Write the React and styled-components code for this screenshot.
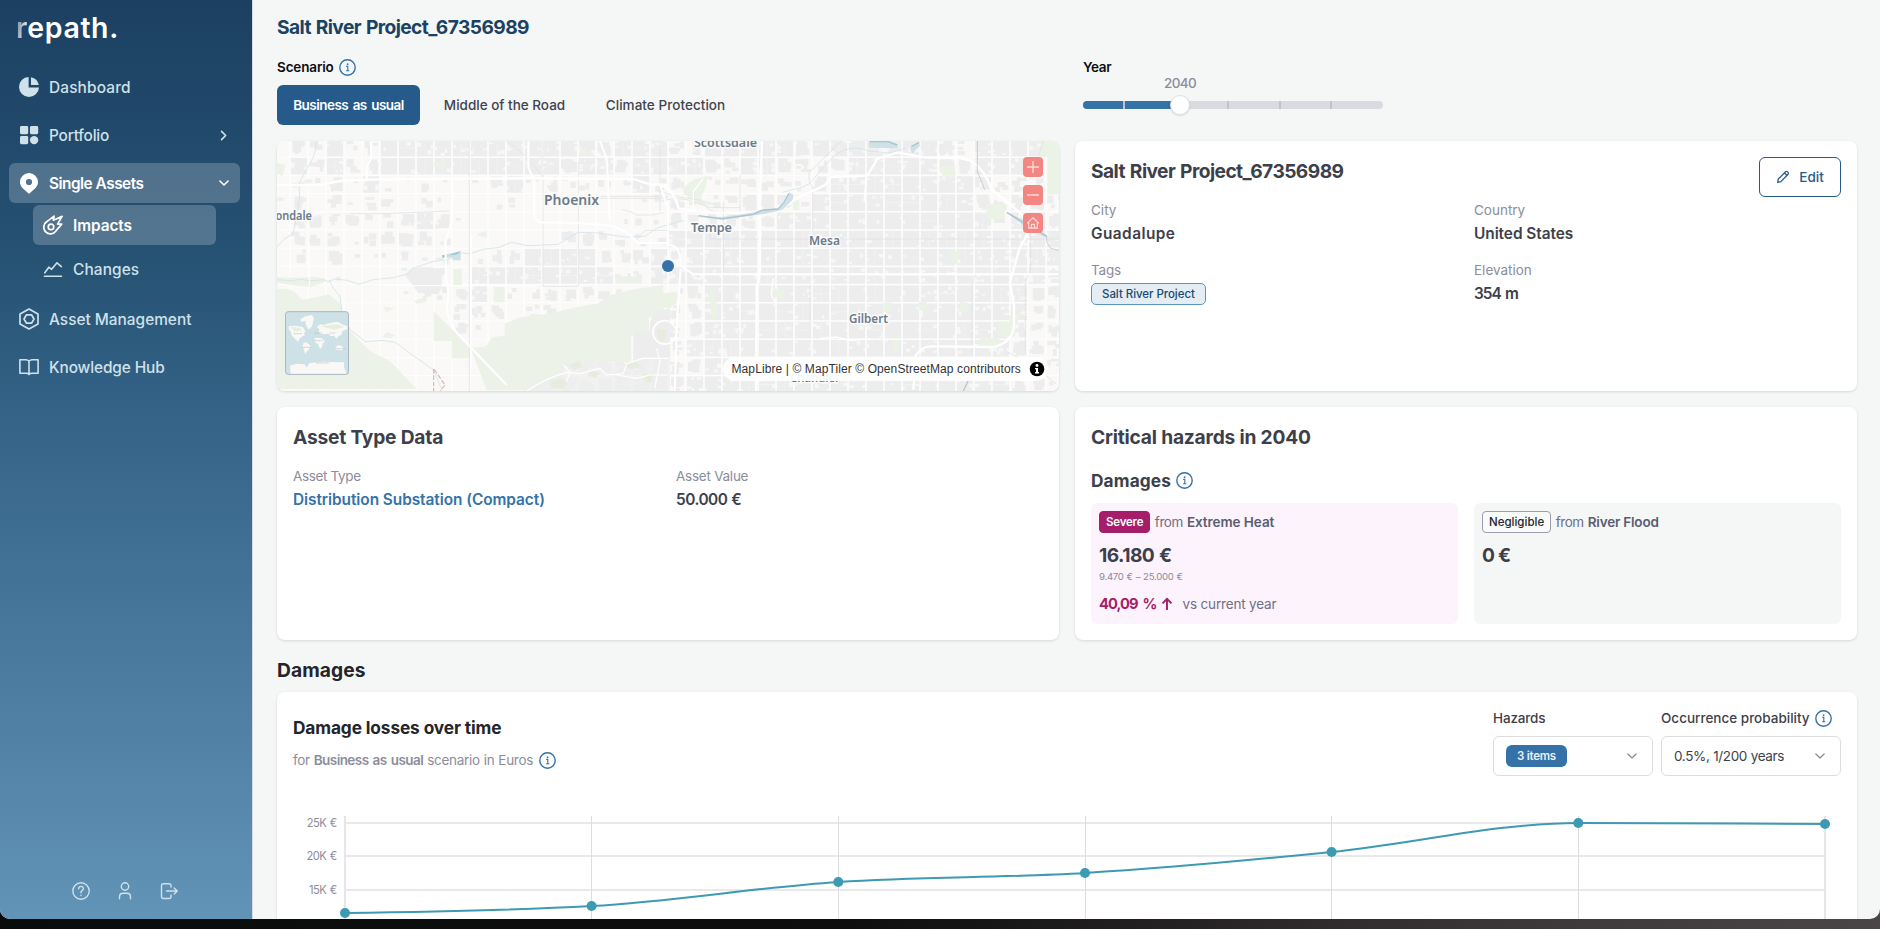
import React from 'react';
import styled, { createGlobalStyle, css } from 'styled-components';

const GlobalStyle = createGlobalStyle`
  * { box-sizing: border-box; }
  html, body { margin: 0; padding: 0; }
  body {
    background: linear-gradient(90deg, #0a0c0c 0%, #0d0e0d 45%, #242122 62%, #3d393b 82%, #4a4648 100%);
    font-family: Inter, "Liberation Sans", sans-serif;
    overflow: hidden;
  }
`;

/* ---------- shell ---------- */
const Backdrop = styled.div`
  height: 929px;
`;
const Shell = styled.div`
  display: flex;
  width: 1880px;
  height: 919px;
  overflow: hidden;
  border-radius: 0 0 10px 10px;
  background: #f5f7f7;
`;
const Sidebar = styled.aside`
  display: flex;
  flex-direction: column;
  flex: none;
  width: 253px;
  padding: 13px 12px 18px 9px;
  border-right: 1px solid #d9dbe0;
  background: linear-gradient(180deg, #1c4062 0%, #265273 28%, #316084 42%, #6294b7 100%);
`;
const Logo = styled.div`
  height: 32px;
  padding-left: 7px;
  margin-bottom: 22px;
  font-size: 28.5px;
  font-weight: 600;
  line-height: 30px;
  letter-spacing: 0.6px;
  color: #fff;
`;
const LogoFade = styled.span`
  background: linear-gradient(100deg, #8fa2b4 35%, #fff 85%);
  background-clip: text;
  color: transparent;
`;
const Nav = styled.nav`
  display: flex;
  flex-direction: column;
`;
const NavItem = styled.a`
  display: flex;
  align-items: center;
  height: 40px;
  width: ${(p) => (p.$sub ? '183px' : '231px')};
  margin: ${(p) => p.$margin || '0 0 8px'};
  padding: 0 10px;
  border-radius: 6px;
  gap: 10px;
  font-size: 15.4px;
  font-weight: ${(p) => (p.$active ? 600 : 500)};
  letter-spacing: ${(p) => p.$ls || 0}px;
  color: ${(p) => (p.$active ? '#fff' : '#cfe1ea')};
  background: ${(p) => (p.$active ? 'rgba(255,255,255,0.21)' : 'transparent')};
  svg { flex: none; }
`;
const NavLabel = styled.span`
  flex: 1;
  white-space: nowrap;
`;
const SidebarFooter = styled.div`
  display: flex;
  justify-content: center;
  gap: 24px;
  margin-top: auto;
  padding-left: 1px;
  color: #cfe1ea;
`;

/* ---------- content ---------- */
const Main = styled.main`
  display: flex;
  flex-direction: column;
  flex: 1;
  padding: 15px 23px 0 24px;
`;
const textBase = css`
  margin: 0;
  white-space: nowrap;
  letter-spacing: ${(p) => p.$ls || 0}px;
  word-spacing: ${(p) => p.$ws || 0}px;
`;
const PageTitle = styled.h1`
  ${textBase}
  font-size: 19.2px;
  line-height: 24px;
  font-weight: 700;
  color: #1b4263;
`;
const Controls = styled.div`
  display: flex;
  height: 68px;
  margin: 18px 0 16px;
`;
const ScenarioBlock = styled.div`
  width: 806px;
`;
const ControlLabel = styled.div`
  ${textBase}
  display: flex;
  align-items: center;
  gap: 5.5px;
  height: 20px;
  font-size: 13.5px;
  font-weight: 600;
  color: #0c0d10;
`;
const Segments = styled.div`
  display: flex;
  gap: 8px;
  margin-top: 8px;
`;
const Segment = styled.button`
  height: 40px;
  width: ${(p) => p.$w}px;
  padding: 0;
  border: 0;
  border-radius: 6px;
  font: ${(p) => (p.$on ? 600 : 500)} 13.5px Inter, sans-serif;
  letter-spacing: ${(p) => p.$ls || 0}px;
  word-spacing: ${(p) => p.$ws || 0}px;
  white-space: nowrap;
  color: ${(p) => (p.$on ? '#fff' : '#41434f')};
  background: ${(p) => (p.$on ? '#265a8b' : 'transparent')};
`;
const YearBlock = styled.div`
  width: 300px;
`;
const SliderBox = styled.div`
  position: relative;
  height: 8px;
  margin-top: 24px;
  border-radius: 4px;
  background: #d9dbe0;
`;
const SliderFill = styled.div`
  width: 97px;
  height: 8px;
  border-radius: 4px 0 0 4px;
  background: #3472a8;
`;
const Tick = styled.i`
  position: absolute;
  top: 0;
  left: ${(p) => p.$x}px;
  width: 2px;
  height: 8px;
  background: #c1c3cb;
`;
const Thumb = styled.div`
  position: absolute;
  left: 87px;
  top: -6px;
  width: 20px;
  height: 20px;
  border: 1px solid #dedfe4;
  border-radius: 50%;
  background: #fff;
  box-shadow: 0 1px 2px rgba(0,0,0,0.12);
`;
const ThumbLabel = styled.span`
  position: absolute;
  left: 77px;
  top: -28px;
  width: 40px;
  text-align: center;
  font-size: 13.5px;
  line-height: 20px;
  font-weight: 500;
  letter-spacing: -0.7px;
  color: #8b8d9b;
`;
const CardGrid = styled.div`
  display: grid;
  grid-template-columns: 782px 782px;
  grid-template-rows: 250px 233px;
  gap: 16px;
`;
const Card = styled.section`
  position: relative;
  overflow: ${(p) => (p.$clip ? 'hidden' : 'visible')};
  padding: ${(p) => (p.$clip ? 0 : '16px')};
  border-radius: 8px;
  background: #fff;
  box-shadow: 0 1px 3px rgba(0,0,0,0.12);
`;
const CardHead = styled.div`
  display: flex;
  justify-content: space-between;
  height: 28px;
  margin-bottom: 15px;
`;
const CardTitle = styled.h2`
  ${textBase}
  font-size: 19.2px;
  line-height: 28px;
  font-weight: 700;
  color: #3d3f4b;
`;
const EditButton = styled.button`
  display: flex;
  align-items: center;
  justify-content: center;
  gap: 9px;
  width: 82px;
  height: 40px;
  padding: 0;
  border: 1px solid #265a8b;
  border-radius: 6px;
  background: #fff;
  color: #265a8b;
  font: 500 13.5px Inter, sans-serif;
`;
const Fields = styled.div`
  display: grid;
  grid-template-columns: 1fr 1fr;
  gap: 16px;
`;
const Field = styled.div`
  display: flex;
  flex-direction: column;
  align-items: flex-start;
  gap: 4px;
`;
const FieldLabel = styled.span`
  ${textBase}
  font-size: 13.5px;
  line-height: 20px;
  color: #8b8d9b;
`;
const FieldValue = styled.span`
  ${textBase}
  font-size: 15.4px;
  line-height: 20px;
  font-weight: 600;
  color: ${(p) => (p.$link ? '#3472a8' : '#3d3f4b')};
`;
const Tag = styled.span`
  ${textBase}
  margin-top: -1px;
  padding: 0 10px;
  border: 1px solid #5c97bb;
  border-radius: 5px;
  background: #e3edf3;
  font-size: 11.5px;
  line-height: 20px;
  font-weight: 500;
  color: #1b4a70;
`;
const SubTitle = styled.h3`
  ${textBase}
  display: flex;
  align-items: center;
  gap: 5px;
  margin: 17px 0 11px;
  height: 24px;
  font-size: 17.3px;
  font-weight: 700;
  color: #3d3f4b;
`;
const HazardGrid = styled.div`
  display: grid;
  grid-template-columns: 1fr 1fr;
  gap: 16px;
`;
const HazardBox = styled.div`
  height: 121px;
  padding: 8px;
  border-radius: 6px;
  background: ${(p) => (p.$severe ? '#fdf3fc' : '#f5f7f7')};
`;
const HazardHead = styled.div`
  display: flex;
  align-items: center;
  height: 22px;
`;
const Badge = styled.span`
  ${textBase}
  margin-right: 4.5px;
  padding: 0 6px;
  border: 1px solid ${(p) => (p.$severe ? '#a61e69' : '#9b9dae')};
  border-radius: 4px;
  background: ${(p) => (p.$severe ? '#a61e69' : '#f9fafa')};
  font-size: 11.5px;
  line-height: 20px;
  font-weight: ${(p) => (p.$severe ? 600 : 500)};
  color: ${(p) => (p.$severe ? '#fff' : '#23252b')};
`;
const HazardText = styled.span`
  ${textBase}
  margin-right: ${(p) => p.$gap || 0}px;
  font-size: 13.5px;
  font-weight: ${(p) => (p.$strong ? 600 : 400)};
  color: ${(p) => (p.$strong ? '#5a5d70' : '#6f7184')};
`;
const Amount = styled.div`
  ${textBase}
  margin-top: 10px;
  font-size: 19.2px;
  line-height: 24px;
  font-weight: 700;
  color: #3d3f4b;
`;
const AmountRange = styled.div`
  ${textBase}
  margin: 3px 0 10px;
  font-size: 9.6px;
  line-height: 14px;
  color: #8b8d9b;
`;
const Change = styled.div`
  display: flex;
  align-items: center;
  height: 20px;
  color: #a61e69;
  svg { margin: 0 10px 0 4px; }
`;
const ChangeValue = styled.span`
  ${textBase}
  font-size: 14.7px;
  font-weight: 700;
`;
const SectionTitle = styled.h2`
  ${textBase}
  margin: 18px 0 10px;
  font-size: 19.2px;
  line-height: 24px;
  font-weight: 700;
  color: #23252b;
`;
const ChartHead = styled.div`
  display: flex;
  justify-content: space-between;
  height: 92px;
`;
const ChartTitle = styled.h3`
  ${textBase}
  margin: 8px 0 10px;
  font-size: 17.3px;
  line-height: 24px;
  font-weight: 700;
  color: #23252b;
`;
const ChartSub = styled.div`
  display: flex;
  align-items: center;
  height: 20px;
  font-size: 13.5px;
  color: #8b8d9b;
`;
const SubPart = styled.span`
  ${textBase}
  margin-right: ${(p) => p.$gap}px;
  font-weight: ${(p) => (p.$strong ? 600 : 400)};
`;
const Filters = styled.div`
  display: flex;
  gap: 8px;
`;
const FilterLabel = styled.div`
  ${textBase}
  display: flex;
  align-items: center;
  gap: 5px;
  height: 20px;
  margin-bottom: 8px;
  font-size: 13.5px;
  font-weight: 500;
  color: #3d3f4b;
`;
const SelectBox = styled.div`
  ${textBase}
  display: flex;
  align-items: center;
  justify-content: space-between;
  width: ${(p) => p.$w}px;
  height: 40px;
  padding: 0 14px 0 12px;
  border: 1px solid #dcdde0;
  border-radius: 6px;
  font-size: 13.5px;
  color: #3d3f4b;
  svg { color: #8b8d9b; }
`;
const CountBadge = styled.span`
  width: 61px;
  height: 22px;
  border-radius: 6px;
  background: #3472a8;
  text-align: center;
  font-size: 11.5px;
  line-height: 22px;
  font-weight: 600;
  letter-spacing: -0.27px;
  color: #e8f1f7;
`;
const ChartSvg = styled.svg`
  display: block;
  width: 1548px;
  height: 129px;
  text { font-size: 11.2px; letter-spacing: -0.6px; word-spacing: 1px; fill: #8b8d9b; }
`;

/* ---------- map overlays ---------- */
const MapSvg = styled.svg`
  display: block;
  width: 782px;
  height: 250px;
`;
const MapButtons = styled.div`
  position: absolute;
  top: 16px;
  right: 16px;
  display: flex;
  flex-direction: column;
  gap: 8px;
`;
const MapButton = styled.button`
  display: flex;
  align-items: center;
  justify-content: center;
  width: 20px;
  height: 20px;
  padding: 0;
  border: 0;
  border-radius: 4px;
  background: #f38682;
  color: #fbdad8;
`;
const Attribution = styled.div`
  position: absolute;
  right: 11px;
  bottom: 10px;
  display: flex;
  align-items: center;
  justify-content: space-between;
  width: 325.5px;
  height: 24px;
  padding: 0 3px 0 9px;
  border-radius: 12px;
  background: rgba(255,255,255,0.93);
  font: 12px "Liberation Sans", Arial, sans-serif;
  letter-spacing: 0.1px;
  white-space: nowrap;
  color: #333;
`;

/* ---------- icons ---------- */
const Stroke = ({ size = 20, box = 24, w = 2, children }) => (
  <svg width={size} height={size} viewBox={`0 0 ${box} ${box}`} fill="none" stroke="currentColor"
    strokeWidth={w} strokeLinecap="round" strokeLinejoin="round">{children}</svg>
);
const InfoIcon = () => (
  <svg width="17" height="17" viewBox="0 0 17 17" fill="none" stroke="#3472a8">
    <circle cx="8.5" cy="8.5" r="7.7" strokeWidth="1.4" />
    <path d="M7.2 7.4h1.6v4.200M7.1 11.700h3.2" strokeWidth="1.100" />
    <circle cx="8.6" cy="5.2" r="0.9" fill="#3472a8" stroke="none" />
  </svg>
);
const PieIcon = () => (
  <svg width="20" height="20" viewBox="0 0 20 20" fill="currentColor">
    <path d="M9.6 0v10.500H20A10 10 0 1 1 9.600 0Z" />
    <path d="M12 .2A9.800 9.800 0 0 1 19.800 8H12.600a.6.6 0 0 1-.6-.6Z" />
  </svg>
);
const TilesIcon = () => (
  <svg width="20" height="20" viewBox="0 0 20 20" fill="currentColor">
    <rect x="1" y="1" width="8.2" height="8.2" rx="1.4" />
    <rect x="11" y="1" width="8.2" height="8.2" rx="1.4" />
    <rect x="1" y="11" width="8.2" height="8.2" rx="1.4" />
    <circle cx="15.1" cy="15.1" r="4.2" />
  </svg>
);
const PinIcon = () => (
  <svg width="20" height="22" viewBox="0 0 20 22" fill="currentColor">
    <path fillRule="evenodd" d="M10 1a9 9 0 0 1 9 9c0 4.400-3.300 6.900-6.400 9.500L10.700 21.300a1 1 0 0 1-1.400 0L7.400 19.500C4.300 16.900 1 14.400 1 10a9 9 0 0 1 9-9Zm0 5.900a3.100 3.100 0 1 0 0 6.200 3.100 3.100 0 0 0 0-6.200Z" />
  </svg>
);
const MeteorIcon = () => (
  <Stroke box={22} w={1.900}>
    <path d="M21 1.500l-5 8.500h4.600l-6.600 7.800a7.300 7.300 0 1 1-10.100-10.300l8.300-6.300-.8 4.500 9.600-4.200Z" />
    <circle cx="8.800" cy="13.100" r="3" />
  </Stroke>
);
const TrendIcon = () => (
  <Stroke box={20} w={1.600}>
    <path d="M1.800 13.800l4-5.600 2.800 2.100 5.400-6.500 4.400 3.800" />
    <path d="M1.500 17.200h17" />
  </Stroke>
);
const HexIcon = () => (
  <svg width="20" height="22" viewBox="0 0 20 22" fill="none" stroke="currentColor" strokeWidth="1.700" strokeLinejoin="round">
    <path d="M10 1l9 5v10l-9 5-9-5V6Z" />
    <path d="M7.500 6.800h5L15 11l-2.500 4.200h-5L5 11Z" />
  </svg>
);
const BookIcon = () => (
  <Stroke box={20} w={1.600}>
    <path d="M10 4.200Q8.700 2.700 7 2.700H.9v13.600h6.300q1.800 0 2.800 1.200 1-1.200 2.800-1.200h6.300V2.700H13q-1.700 0-3 1.500Zm0 0v13" />
  </Stroke>
);
const Chevron = ({ dir, size = 12, w = 1.600 }) => (
  <Stroke size={size} box={12} w={w}>
    <path d={dir === 'right' ? 'M4.200 2.200l3.800 3.800-3.800 3.800' : 'M1.900 4L6 8 10.100 4'} />
  </Stroke>
);
const PencilIcon = () => (
  <Stroke size={14} box={14} w={1.300}>
    <path d="M2.300 9L9.600 1.700q1.100-.8 2.100.2t.4 2.300L4.900 11.600 1.700 12.400Z M8.500 3l2.500 2.500" />
  </Stroke>
);
const HelpIcon = () => (
  <Stroke box={20} w={1.400}>
    <circle cx="10" cy="10" r="8.200" />
    <path d="M7.600 7.700q.2-2.300 2.500-2.300t2.300 2.200q0 1.300-1.300 2-1.100.6-1.100 1.700v.4M10 14.300v.2" />
  </Stroke>
);
const UserIcon = () => (
  <Stroke box={20} w={1.400}>
    <circle cx="10" cy="5.500" r="3.700" />
    <path d="M4.500 17.800v-2q0-3.600 3.700-3.600h3.600q3.700 0 3.700 3.600v2" />
  </Stroke>
);
const LogoutIcon = () => (
  <Stroke box={20} w={1.400}>
    <path d="M12 6V4.600q0-1.900-1.900-1.900H4.400q-1.900 0-1.900 1.900v11q0 1.900 1.900 1.900h5.700q1.900 0 1.900-1.900V14" />
    <path d="M7.500 10h10.800M15.200 7l3.100 3-3.100 3" />
  </Stroke>
);
const ArrowUpIcon = () => (
  <svg width="12" height="14" viewBox="0 0 12 14" fill="none" stroke="currentColor" strokeWidth="1.900">
    <path d="M6 13V2M1.500 6.300L6 1.800l4.500 4.500" />
  </svg>
);

/* ---------- map drawing ---------- */
// Built-up share (0-9) of every square-mile cell, west to east, north to south.
const DENSITY = [
  '06382399888888888768875689987698888886378975',
  '08384399999998876775888755776546888876579861',
  '02151721210168242222835223443268887988864522',
  '14041430210013000000124323665289989998864553',
  '14544224851000000001215445568889899999975775',
  '04341356420000005522238899899998999988988787',
  '04061112120153898954573788999899889998887',
  '00010001721888798872277789999998989978979886',
  '00000001424722254331103588999899999978989764',
  '00000000004540430000223487899899998989888733',
  '00000000005100000000584678899989989999887534',
  '00000000000000000003784788999899899889887654',
  '00000000000000034567875678999998989998998543',
  '00000000000000055667876788989989899899888642',
];
const rng = (seed) => {
  let s = seed;
  return () => {
    s = (s * 1664525 + 1013904223) % 4294967296;
    return s / 4294967296;
  };
};
const buildBlocks = () => {
  const rand = rng(67);
  let built = '';
  let holes = '';
  let lanes = '';
  const rect = (x, y, w, h) => `M${x.toFixed(1)} ${y.toFixed(1)}h${w.toFixed(1)}v${h.toFixed(1)}h${(-w).toFixed(1)}z`;
  DENSITY.forEach((row, r) => {
    row.padEnd(44, '7').split('').forEach((ch, c) => {
      const d = Number(ch);
      const x = -5 + c * 18;
      const y = -2 + r * 18.2;
      if (d >= 7) {
        built += rect(x + 0.8, y + 0.8, 16.4, 16.6);
        const bites = (10 - d) * 2 - 1;
        for (let i = 0; i < bites; i += 1) {
          const edge = rand() < 0.75;
          const w = 1.5 + rand() * 3.2;
          const h = 1.5 + rand() * 2.8;
          const px = edge ? (rand() < 0.5 ? 0.8 : 17.2 - w) : 2 + rand() * 12;
          holes += rect(x + px, y + 1 + rand() * (16 - h), w, h);
        }
        if (rand() < 0.25) lanes += `M${(x + 9).toFixed(1)} ${y.toFixed(1)}v18`;
        if (rand() < 0.25) lanes += `M${x.toFixed(1)} ${(y + 9).toFixed(1)}h18`;
      } else {
        for (let i = 0; i < d; i += 1) {
          const w = 3 + rand() * (2 + d * 1.3);
          const h = 2.5 + rand() * (2 + d * 1.2);
          built += rect(x + 1 + rand() * (16 - w), y + 1 + rand() * (16 - h), w, h);
        }
      }
    });
  });
  return { built, holes, lanes };
};
const BLOCKS = buildBlocks();
const WEST = 'translate(-7 -6) scale(0.33333)';
const EAST = 'translate(383 -6) scale(0.33333)';
const PARKS_WEST = [
  'M20 462h38l20 12 18 20 60-10 20-6 38 30 6 60 50 50 30 30 60 30 80 84H20Z',
  'M20 426l60 2 55-2 30 4-2 12-40 14-40-4-63-8Z',
  'M491 528l50 50 60 62v30h-56v-52h-54Z',
  'M602 640l46-6 18-28 38-4v-36l48-20 88-10 40-10 60-14 42-6 40-26 60-16 98-14v92l-44 6 4 54h-56v80h-132l-70 6-6 50-30 20-40 8h-156Z',
  'M672 456h32v46h-32Z', 'M550 402h26v48h-26Z', 'M1036 424h80v22h-80Z',
  'M930 40h22v18h-22Z', 'M492 82h34v14h-34Z', 'M110 132l20 4-8 10-28-2Z',
  'M338 515l36 4-24 12Z', 'M432 498l24-8 14 12-30 4Z', 'M336 606l14-14 26 8-16 10Z', 'M622 296l28-8v20l-24-6Z',
  'M20 84l26 6-8 34-16-8Z',
];
const PARKS_EAST = [
  'M68 160l32-26 44-12-10 44-16 28 34 6 14 10-50-2-44-30Z',
  'M1142 18h56v160h-36V66h-20Z', 'M0 476l50-6v34l-20 16-30-4Z',
  'M980 206h54v46h-54Z', 'M842 96l44-4v30h-40Z', 'M870 350l30-4-8 42-20-8Z',
  'M1016 560h50v44h-50Z', 'M958 610h60v26h-60Z', 'M146 456l18 20 12 60-22 20-2-50Z',
  'M336 460l40 6-6 24-30-6Z', 'M670 502h24v28h-24Z', 'M776 500h24v24h-24Z', 'M0 590l30 6-24 40-6-4Z',
  'M696 616h22v36h-16Z', 'M900 500l24 4v26l-20-4Z', 'M1048 540h26v30h-26Z', 'M398 200l20-6v30l-18 2Z',
];

const MapDrawing = () => (
  <MapSvg viewBox="0 0 782 250">
    <defs>
      <pattern id="mile" x="-5.500" y="-2.500" width="18" height="18.200" patternUnits="userSpaceOnUse">
        <path d="M0 .5H18M.5 0V18.200" stroke="#fff" strokeWidth="1" opacity="0.850" />
      </pattern>
    </defs>
    <rect width="782" height="250" fill="#faf9f8" />
    <path d={BLOCKS.built} fill="#ededee" />
    <path d={BLOCKS.holes} fill="#f8f7f7" />
    <path d={BLOCKS.lanes} fill="none" stroke="#f5f5f5" strokeWidth="0.600" />
    <rect width="782" height="250" fill="url(#mile)" />
    <g transform={WEST} fill="#edf2e9">
      {PARKS_WEST.map((d) => <path key={d} d={d} />)}
    </g>
    <g transform={EAST} fill="#ebf2e6">
      {PARKS_EAST.map((d) => <path key={d} d={d} />)}
    </g>
    <g transform={WEST} fill="none">
      <g fill="#ededee">
        <path d="M1140 560l18-30 42-10v150h-110v-80h50Z" />
        <path d="M870 690h60v-12h70l40 8h50v-20h110v102H760l40-36 70-4Z" opacity="0.750" />
        <path d="M405 420l20-20h90v58l-10 20-60-4Z" />
      </g>
      <g fill="#e6eddf">
        <path d="M840 740l30-10 20 12-10 20-36-2ZM900 690l26-14 10 20-24 10ZM960 706l30 6-12 18-24-8ZM1060 690l34-14 20 18-30 10ZM1120 716l30 4-6 24-20-6ZM1160 580l28 6-6 34-20-8Z" />
      </g>
      <g stroke="#d3e4e9" strokeWidth="2.600">
        <path d="M139 18q-2 40-18 66t-34 62q6 40-4 80-8 46-14 70-30 14-48 40" />
        <path d="M20 434l50 4 20-6 30 6 40-4 14 6 20-8 38 4 34 12 44-14 60-6 40-10 18-18 60-20 50-8 32-18 30 2 44-14 40-4 40-16 50 10 90-4 60-36 60 2 80 12 60-2 40-26 76-22" />
        <path d="M178 436l12 24 20 24 6 50 24 50 46 36 50-4 40 6 54 40 60 42 26 62" />
      </g>
      <path d="M536 356l36-8v28h-24v-8h-26v-10Z" fill="#cde1e6" />
      <path d="M516 360l16 2 40-14-10 10-34 4-10 8Z" fill="#a3bfcb" />
      <g stroke="#e3e3e5" strokeWidth="2.500">
        <path d="M598 18v750M819 120v334h106V80M816 18v110M711 18l50 40 52 60M990 184h205M990 190h205M60 236h280l200-8M1170 18v210M1195 286h-70l-26 30M1056 224l30 8 14 8h50l30-8" />
      </g>
      <g stroke="#fff" strokeLinejoin="round">
        <path d="M20 150h130l60-12 80-4 180-2 320-2 300 2 50 16 54 2" strokeWidth="7" />
        <path d="M302 18l2 50-14 30v34M546 134l2 50-4 80-18 60 2 100 8 50-6 50q10 50 40 80l140 146" strokeWidth="6" />
        <path d="M775 18v80l18 40v110l14 14 120 2 96 8q50 14 80 52h92M990 18l20 54 4 60 2 60 4 70M603 300v400" strokeWidth="6" />
        <path d="M118 320v136M330 340v112h270l200 2M20 236h40l180-2" strokeWidth="3" />
        <circle cx="1184" cy="592" r="35" strokeWidth="5" />
        <path d="M770 768q60-40 120-56l40 4 60-16 20 20 50-4 10-30 50-16h75M1040 720l60 10 40-10h55M880 690l20 20-10 30M1160 640l10 40-16 80" strokeWidth="3.500" />
      </g>
      <path d="M491 702v66M493 704l32 46-14 18" stroke="#dbb5b5" strokeWidth="3.500" strokeDasharray="14 5" />
    </g>
    <g transform={EAST} fill="none">
      <g stroke="#e0e0e3" strokeWidth="2.300">
        <path d="M544 18l-96 94q-6 24 10 46v145M150 312h1045M150 280v32M190 200v210M240 120v110M450 450v110M952 18v100M1112 300v100l-16 40v220M946 420l-10 30v210M0 170l60 16 60 10 30 30 40 10M0 200q60-20 110 4l40 14h90M1150 18l-14 46M1040 650l80 40 70 58" />
      </g>
      <g stroke="#fff" strokeLinejoin="round">
        <path d="M306 18l-6 180v220l-10 40-2 310" strokeWidth="7" />
        <path d="M0 150q40 10 56 70l90 12 150 6q70-10 110-46l90-42 16-24 110-4 30-50 60-20 84 16h100l38 10q40 26 60 84l96 80 10 60-22 40-28 100 12 70v60q-4 50-60 64l-190-2q-30 0-46 30l-6 100" strokeWidth="7" />
        <path d="M0 150l24 70v110q40 0 36 60l40 28h1095M62 400l-10 140-8 230" strokeWidth="6" />
        <path d="M0 340h22M100 230v-60l30-40M340 430l-6 50 16 30M480 610l50-4 40 10 60-4M620 120l-8 80" strokeWidth="4" />
      </g>
      <g fill="#cde1e6">
        <path d="M115 244l70 2 100-14 18-8 54-4 20-20 10-28 14 8-4 16-30 28-50 12-120 16-82-6Z" />
        <path d="M626 18h60l26 10v12l-84-2ZM750 40l26-20 4 12-24 24Z" />
        <path d="M1040 232l60 28 60 40v8l-70-36Z" />
      </g>
      <g stroke="#a3bfcb" strokeWidth="4">
        <path d="M116 242l70 10 94-14 24-12 50-4 18-20 14-26M630 20h54l28 10M754 34l24-12M1040 232l120 72M910 768l14-30" opacity="0.850" />
        <path d="M952 18v90l22 56M1160 304v16l12 20 24 6" strokeWidth="2.500" opacity="0.700" />
      </g>
      <path d="M448 146l60-68q40-46 92-38l26 8 64 6 50-16M448 146l-20 10-60 16" stroke="#d3e4e9" strokeWidth="2.500" />
    </g>
    <g fill="#6c7a89" stroke="#fafafa" strokeWidth="3" paintOrder="stroke" fontFamily='"Noto Sans", sans-serif' fontWeight="600" fontSize="13">
      <text x="267" y="63.500" fontSize="15" textLength="55" lengthAdjust="spacingAndGlyphs">Phoenix</text>
      <text x="-15" y="78.500" textLength="50" lengthAdjust="spacingAndGlyphs">Avondale</text>
      <text x="417" y="5.500" textLength="63" lengthAdjust="spacingAndGlyphs">Scottsdale</text>
      <text x="414" y="91" textLength="41" lengthAdjust="spacingAndGlyphs">Tempe</text>
      <text x="532" y="104" textLength="31" lengthAdjust="spacingAndGlyphs">Mesa</text>
      <text x="572" y="182" textLength="39" lengthAdjust="spacingAndGlyphs">Gilbert</text>
      <text x="513" y="241" textLength="50" lengthAdjust="spacingAndGlyphs">Chandler</text>
    </g>
    <circle cx="391" cy="125" r="6" fill="#3472a8" />
    <g transform={WEST}>
      <rect x="46.500" y="530" width="189" height="188" rx="8" fill="#cde1e6" stroke="#aab5c6" strokeWidth="3" />
      <g fill="#f9f8f6">
        <path d="M92 552l14-8 20-4 6 10-6 24-10 10-8-14-2-12-14 2Z" />
        <path d="M56 574l20-2 22 4 8 12-4 8 4 4-12 6-6 6-4 8-8-8-10-10-4-12-6-8Z" />
        <path d="M100 624l8-2 14 10-6 12-6 6-4 8-4-12-4-12Z" />
        <path d="M140 576l10-8 12 2 10-4 30-6 14 8 16 6v8l-14 6-4 12-10 4-4 8-8-10-10 2-6-8-14 2-16-4 2-12Z" />
        <path d="M134 608l22 2 8 8-6 8-2 10-6 6-6-14-10-8Z" />
        <path d="M196 636l12-6 12 8-2 8-22-2Z" />
        <path d="M60 692l20-6 24 2 6 10 8-14 44-4 60 2v14l8 20H62Z" />
      </g>
      <path d="M60 576l30 2 6 8-20 4ZM152 574l50-6 20 8-30 8Z" fill="#e6eedd" />
      <g stroke="#a9a2a8" strokeWidth="2.500" strokeDasharray="3 1.500" opacity="0.700">
        <path d="M72 596h24M134 594h22M134 617h24M98 637h24M180 594h16M194 641h32M140 684h38" />
      </g>
    </g>
  </MapSvg>
);

/* ---------- chart drawing ---------- */
const POINTS = [[345, 913], [591.6, 906], [838.3, 882], [1085, 873], [1331.6, 852], [1578.3, 823], [1825, 824]]
  .map(([x, y]) => [x - 293, y - 800]);
const curve = (pts) => {
  const slope = pts.slice(1).map(([x, y], i) => (y - pts[i][1]) / (x - pts[i][0]));
  const tan = pts.map((_, i) => {
    if (i === 0) return slope[0] * 0.5;
    if (i === pts.length - 1) return slope[i - 1];
    const [a, b] = [slope[i - 1], slope[i]];
    if (a * b <= 0) return 0;
    return Math.sign(a) * Math.min(Math.abs(a), Math.abs(b), 0.25 * Math.abs(a + b)) * 2;
  });
  return pts.slice(1).reduce((d, [x, y], i) => {
    const [px, py] = pts[i];
    const h = (x - px) / 3;
    return `${d}C${px + h} ${py + h * tan[i]} ${x - h} ${y - h * tan[i + 1]} ${x} ${y}`;
  }, `M${pts[0][0]} ${pts[0][1]}`);
};
const LossChart = () => (
  <ChartSvg viewBox="0 0 1548 129">
    {[['25K €', 23], ['20K €', 56], ['15K €', 90]].map(([label, y]) => (
      <g key={label}>
        <path d={`M52 ${y}H1532`} stroke="#e9e9ea" strokeWidth="2" />
        <text x="43.500" y={y + 4} textAnchor="end">{label}</text>
      </g>
    ))}
    {POINTS.map(([x], i) => (
      <path key={x} d={`M${i % 6 ? Math.floor(x) + 0.5 : x} 16V129`} stroke={i % 6 ? '#dddddf' : '#e6e6e8'} strokeWidth={i % 6 ? 1 : 2} />
    ))}
    <path d={curve(POINTS)} fill="none" stroke="#3c9ab2" strokeWidth="2" />
    {POINTS.map(([x, y]) => <circle key={x} cx={x} cy={y} r="5" fill="#3c9ab2" />)}
  </ChartSvg>
);

export default function App() {
  return (
    <Backdrop>
      <GlobalStyle />
      <Shell>
        <Sidebar>
          <Logo><LogoFade>r</LogoFade>epath.</Logo>
          <Nav>
            <NavItem $ls={0.15}><PieIcon /><NavLabel>Dashboard</NavLabel></NavItem>
            <NavItem $ls={-0.2}><TilesIcon /><NavLabel>Portfolio</NavLabel><Chevron dir="right" size={13} w={1.500} /></NavItem>
            <NavItem $active $ls={-0.5} $margin="0 0 2px"><PinIcon /><NavLabel>Single Assets</NavLabel><Chevron dir="down" /></NavItem>
            <NavItem $sub $active $ls={-0.08} $margin="0 0 4px 24px"><MeteorIcon /><NavLabel>Impacts</NavLabel></NavItem>
            <NavItem $sub $ls={0.12} $margin="0 0 10px 24px"><TrendIcon /><NavLabel>Changes</NavLabel></NavItem>
            <NavItem><HexIcon /><NavLabel>Asset Management</NavLabel></NavItem>
            <NavItem $ls={-0.1}><BookIcon /><NavLabel>Knowledge Hub</NavLabel></NavItem>
          </Nav>
          <SidebarFooter><HelpIcon /><UserIcon /><LogoutIcon /></SidebarFooter>
        </Sidebar>

        <Main>
          <PageTitle $ls={-0.6} $ws={1}>Salt River Project_67356989</PageTitle>
          <Controls>
            <ScenarioBlock>
              <ControlLabel $ls={-0.15}>Scenario<InfoIcon /></ControlLabel>
              <Segments>
                <Segment $on $w={143} $ls={-0.52} $ws={1.5}>Business as usual</Segment>
                <Segment $w={153}>Middle of the Road</Segment>
                <Segment $w={153} $ls={0.05}>Climate Protection</Segment>
              </Segments>
            </ScenarioBlock>
            <YearBlock>
              <ControlLabel $ls={-0.3}>Year</ControlLabel>
              <SliderBox>
                <SliderFill />
                {[40, 144, 196, 247].map((x) => <Tick key={x} $x={x} />)}
                <Thumb />
                <ThumbLabel>2040</ThumbLabel>
              </SliderBox>
            </YearBlock>
          </Controls>

          <CardGrid>
            <Card $clip>
              <MapDrawing />
              <MapButtons>
                <MapButton><Stroke size={14} box={14} w={1.400}><path d="M7 1.500v11M1.500 7h11" /></Stroke></MapButton>
                <MapButton><Stroke size={14} box={14} w={1.400}><path d="M1.500 7h11" /></Stroke></MapButton>
                <MapButton><Stroke size={14} box={14} w={1.200}><path d="M1.500 7L7 1.800 12.500 7M2.700 6v6.200h8.600V6M5.500 12V8.300h3V12" /></Stroke></MapButton>
              </MapButtons>
              <Attribution>
                MapLibre | © MapTiler © OpenStreetMap contributors
                <svg width="16" height="16" viewBox="0 0 16 16">
                  <circle cx="8" cy="8" r="7.300" fill="#000" />
                  <circle cx="8" cy="4.500" r="1.400" fill="#fff" />
                  <path d="M6 7h3v4h1v1.400H6V11h1V8.300H6Z" fill="#fff" />
                </svg>
              </Attribution>
            </Card>

            <Card>
              <CardHead>
                <CardTitle $ls={-0.58} $ws={1}>Salt River Project_67356989</CardTitle>
                <EditButton><PencilIcon />Edit</EditButton>
              </CardHead>
              <Fields>
                <Field><FieldLabel>City</FieldLabel><FieldValue $ls={0.44}>Guadalupe</FieldValue></Field>
                <Field><FieldLabel>Country</FieldLabel><FieldValue $ls={-0.05}>United States</FieldValue></Field>
                <Field><FieldLabel $ls={-0.2}>Tags</FieldLabel><Tag $ls={-0.05}>Salt River Project</Tag></Field>
                <Field><FieldLabel>Elevation</FieldLabel><FieldValue $ls={-1} $ws={1.5}>354 m</FieldValue></Field>
              </Fields>
            </Card>

            <Card>
              <CardHead><CardTitle $ls={-0.2}>Asset Type Data</CardTitle></CardHead>
              <Fields>
                <Field>
                  <FieldLabel $ls={-0.36}>Asset Type</FieldLabel>
                  <FieldValue $link $ls={-0.05}>Distribution Substation (Compact)</FieldValue>
                </Field>
                <Field><FieldLabel $ls={-0.25}>Asset Value</FieldLabel><FieldValue $ls={-0.5} $ws={0.5}>50.000 €</FieldValue></Field>
              </Fields>
            </Card>

            <Card>
              <CardTitle $ls={-0.2}>Critical hazards in 2040</CardTitle>
              <SubTitle $ls={0.12}>Damages<InfoIcon /></SubTitle>
              <HazardGrid>
                <HazardBox $severe>
                  <HazardHead>
                    <Badge $severe $ls={-0.2}>Severe</Badge>
                    <HazardText $gap={4} $ls={-0.43}>from</HazardText>
                    <HazardText $strong $ls={-0.06}>Extreme Heat</HazardText>
                  </HazardHead>
                  <Amount $ls={-0.55} $ws={0.7}>16.180 €</Amount>
                  <AmountRange $ls={-0.27} $ws={0.5}>9.470 € – 25.000 €</AmountRange>
                  <Change>
                    <ChangeValue $ls={-0.95} $ws={2.5}>40,09 %</ChangeValue>
                    <ArrowUpIcon />
                    <HazardText $ls={-0.17}>vs current year</HazardText>
                  </Change>
                </HazardBox>
                <HazardBox>
                  <HazardHead>
                    <Badge>Negligible</Badge>
                    <HazardText $gap={4} $ls={-0.43}>from</HazardText>
                    <HazardText $strong $ls={-0.2}>River Flood</HazardText>
                  </HazardHead>
                  <Amount $ls={-0.7}>0 €</Amount>
                </HazardBox>
              </HazardGrid>
            </Card>
          </CardGrid>

          <SectionTitle $ls={0.08}>Damages</SectionTitle>
          <Card>
            <ChartHead>
              <div>
                <ChartTitle $ls={-0.12}>Damage losses over time</ChartTitle>
                <ChartSub>
                  <SubPart $gap={4} $ls={-0.35}>for</SubPart>
                  <SubPart $strong $gap={4} $ls={-0.55} $ws={1.2}>Business as usual</SubPart>
                  <SubPart $gap={6} $ls={-0.3} $ws={0.5}>scenario in Euros</SubPart>
                  <InfoIcon />
                </ChartSub>
              </div>
              <Filters>
                <div>
                  <FilterLabel $ls={-0.17}>Hazards</FilterLabel>
                  <SelectBox $w={160}><CountBadge>3 items</CountBadge><Chevron dir="down" w={1.300} /></SelectBox>
                </div>
                <div>
                  <FilterLabel>Occurrence probability<InfoIcon /></FilterLabel>
                  <SelectBox $w={180} $ls={-0.36} $ws={0.3}>0.5%, 1/200 years<Chevron dir="down" w={1.300} /></SelectBox>
                </div>
              </Filters>
            </ChartHead>
            <LossChart />
          </Card>
        </Main>
      </Shell>
    </Backdrop>
  );
}
